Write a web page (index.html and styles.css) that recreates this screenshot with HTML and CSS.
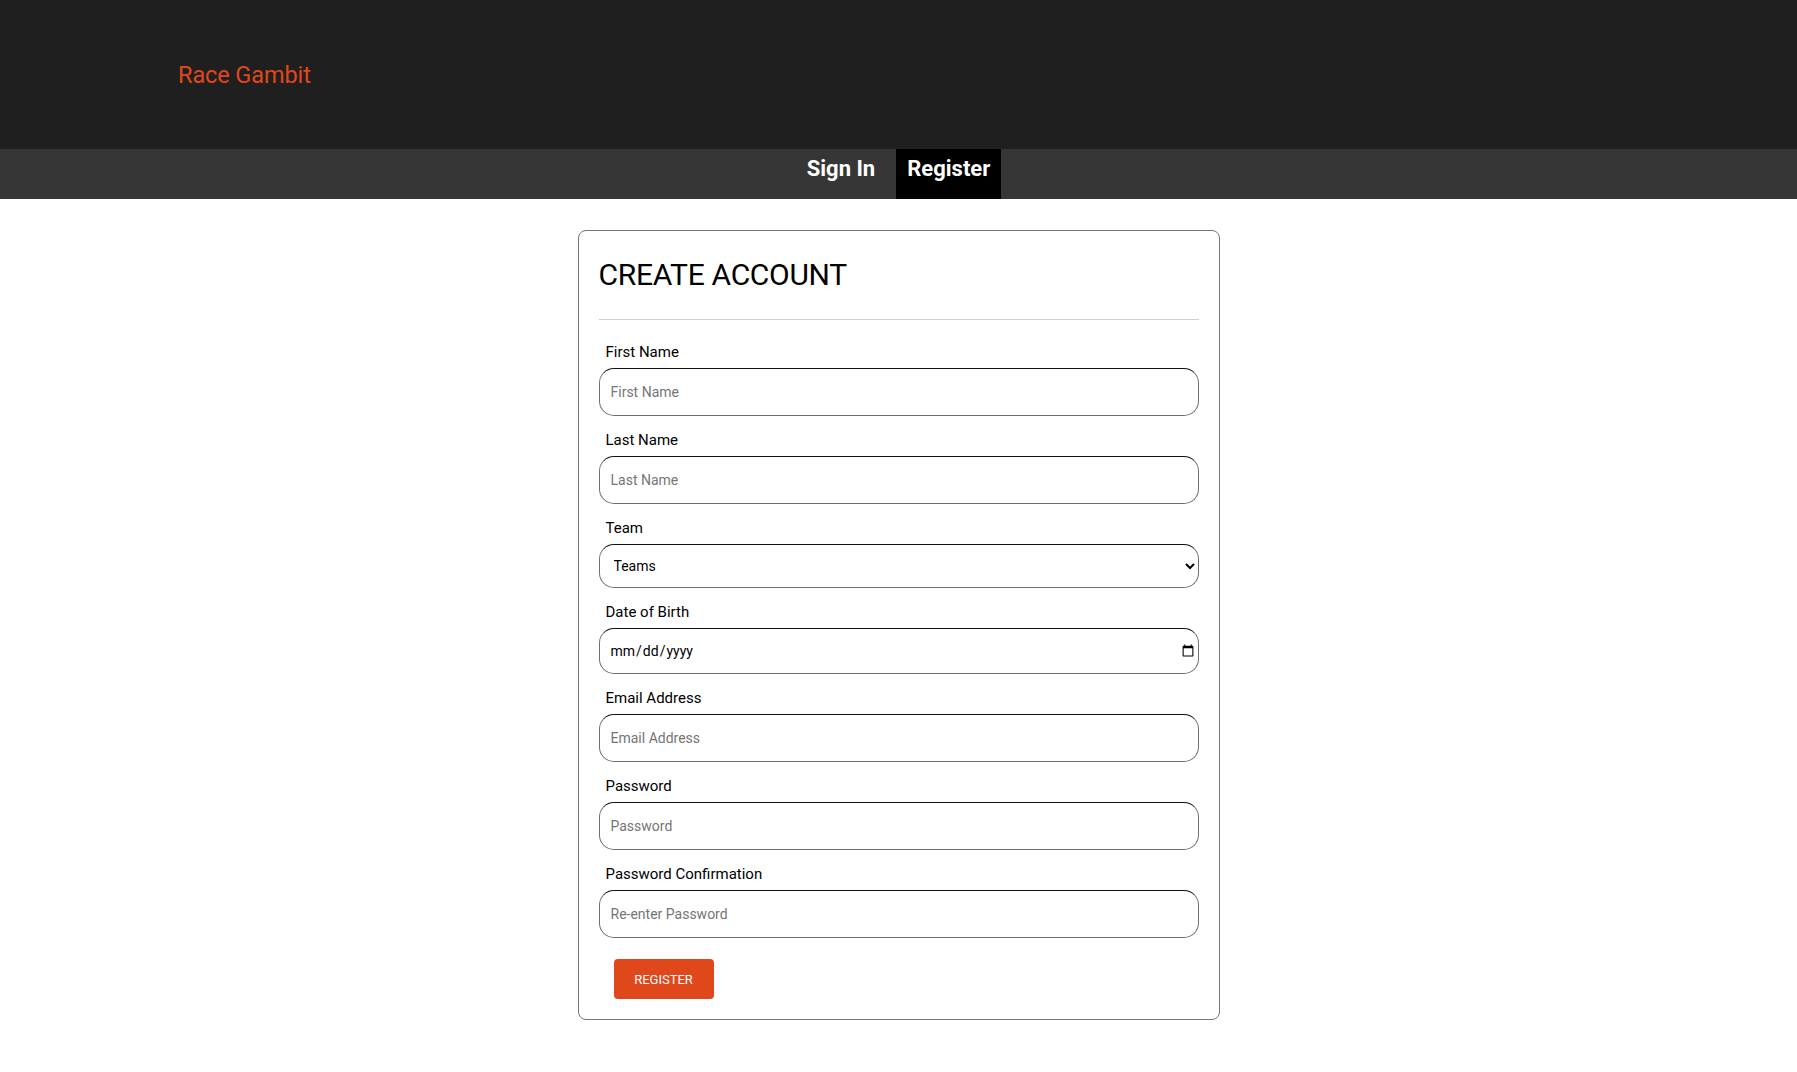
FILE: index.html
```html
<!DOCTYPE html>
<html lang="en">
<head>
<meta charset="utf-8">
<title>Race Gambit - Register</title>
<link rel="stylesheet" href="styles.css">
</head>
<body>
<header class="site-header">
  <a class="brand" href="#">Race Gambit</a>
</header>
<nav class="main-nav">
  <a class="nav-link" href="#">Sign In</a>
  <a class="nav-link active" href="#">Register</a>
</nav>
<main class="page">
  <section class="card">
    <h1 class="card-title">CREATE ACCOUNT</h1>
    <hr class="divider">
    <form class="form">
      <div class="field">
        <label class="field-label" for="fn">First Name</label>
        <input class="control" id="fn" type="text" placeholder="First Name">
      </div>
      <div class="field">
        <label class="field-label" for="ln">Last Name</label>
        <input class="control" id="ln" type="text" placeholder="Last Name">
      </div>
      <div class="field">
        <label class="field-label" for="team">Team</label>
        <select class="control control-select" id="team">
          <option>Teams</option>
        </select>
      </div>
      <div class="field">
        <label class="field-label" for="dob">Date of Birth</label>
        <input class="control control-date" id="dob" type="date">
      </div>
      <div class="field">
        <label class="field-label" for="em">Email Address</label>
        <input class="control" id="em" type="email" placeholder="Email Address">
      </div>
      <div class="field">
        <label class="field-label" for="pw">Password</label>
        <input class="control" id="pw" type="password" placeholder="Password">
      </div>
      <div class="field">
        <label class="field-label" for="pw2">Password Confirmation</label>
        <input class="control" id="pw2" type="password" placeholder="Re-enter Password">
      </div>
      <button class="btn-register" type="button">REGISTER</button>
    </form>
  </section>
</main>
</body>
</html>
```
FILE: styles.css
```css
* { box-sizing: border-box; }

body {
  margin: 0;
  font-family: Roboto, "Liberation Sans", sans-serif;
  color: #000;
  background: #fff;
}

.site-header {
  height: 149px;
  background: #1f1f1f;
  display: flex;
  align-items: center;
  padding-left: 178px;
}

.brand {
  color: #e0471c;
  font-size: 23.5px;
  text-decoration: none;
  letter-spacing: -0.1px;
}

.main-nav {
  height: 50px;
  background: #363636;
  display: flex;
  justify-content: center;
  gap: 10px;
}

.nav-link {
  display: flex;
  align-items: center;
  padding: 0 11px 12px;
  color: #fff;
  font-weight: 700;
  font-size: 22px;
  text-decoration: none;
}

.nav-link.active {
  background: #000;
}

.page {
  padding: 31px 0 40px;
}

.card {
  width: 642px;
  margin: 0 auto;
  border: 1px solid #757575;
  border-radius: 8px;
  padding: 20px;
}

.card-title {
  margin: 0;
  padding-top: 4px;
  font-size: 30px;
  line-height: 40px;
  font-weight: 400;
  letter-spacing: -0.3px;
}

.divider {
  margin: 24px 0 8px;
  border: 0;
  border-top: 1px solid #cfcfcf;
}

.form {
  display: flex;
  flex-direction: column;
}

.field {
  display: flex;
  flex-direction: column;
  margin-top: 12px;
}

.field-label {
  padding-left: 7px;
  font-size: 15px;
  line-height: 24px;
  margin-bottom: 4px;
}

.control {
  width: 100%;
  height: 48px;
  border: 1px solid #6f6f6f;
  border-top-color: #111;
  border-radius: 15px;
  padding: 0 11px;
  font-family: Roboto, "Liberation Sans", sans-serif;
  font-size: 14px;
  color: #000;
  background: #fff;
}

.control::placeholder {
  color: #757575;
}

.control-select {
  height: 44px;
  padding-left: 10px;
}

.control-date {
  height: 46px;
  padding: 0 1px 0 10px;
}

.btn-register {
  align-self: flex-start;
  margin: 21px 0 0 15px;
  width: 100px;
  height: 40px;
  border: 0;
  border-radius: 4px;
  background: #e0481c;
  color: #fff;
  font-family: Roboto, "Liberation Sans", sans-serif;
  font-size: 13px;
}
```
